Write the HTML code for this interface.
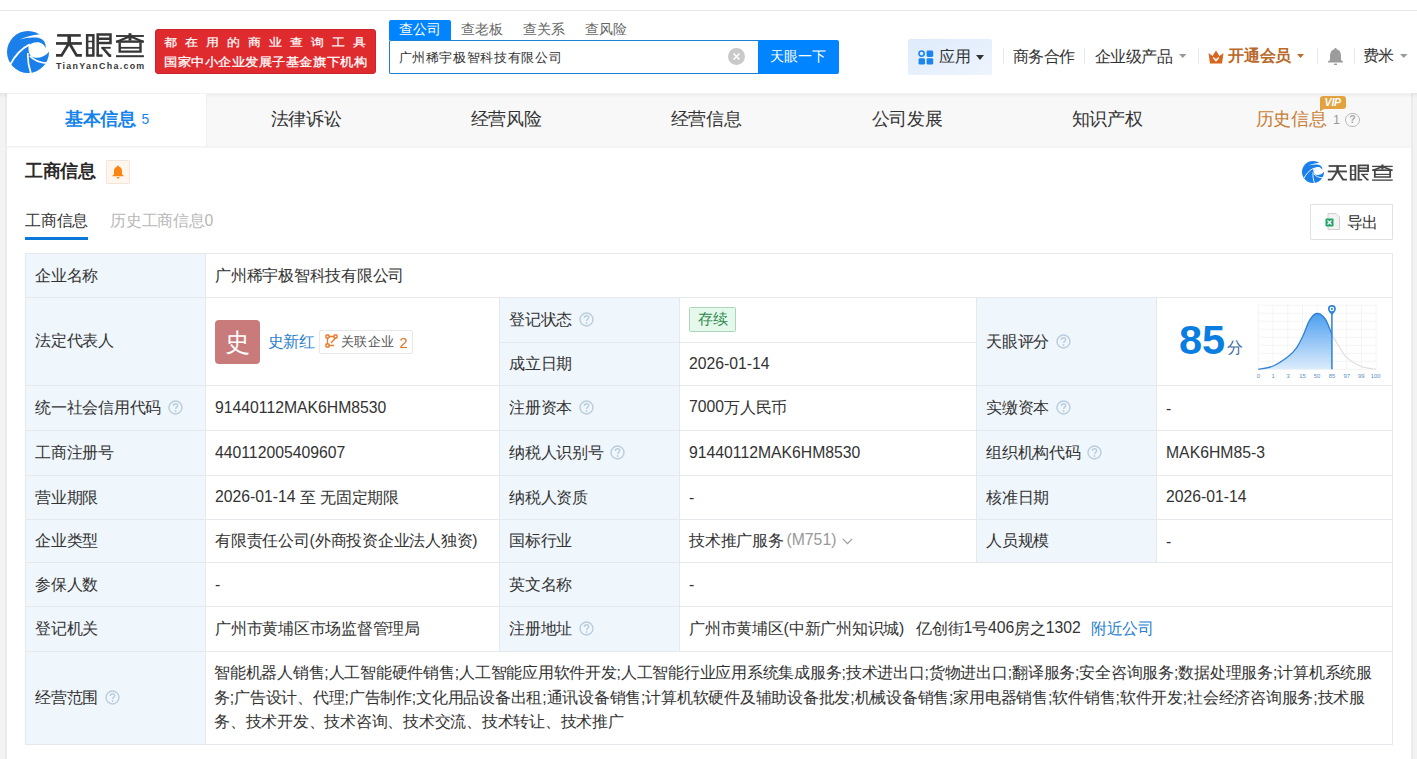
<!DOCTYPE html><html><head><meta charset="utf-8"><style>
*{margin:0;padding:0;box-sizing:border-box}
html,body{width:1417px;height:759px;overflow:hidden}
body{position:relative;background:#f3f3f3;font-family:"Liberation Sans",sans-serif;color:#333}
.t{position:absolute;white-space:nowrap}
.r{position:absolute}
.q{display:inline-block;width:14px;height:14px;border:1.5px solid #bccad6;border-radius:50%;color:#b5c4d1;font-size:10.5px;line-height:11px;text-align:center;font-weight:bold;vertical-align:middle;position:relative;top:-1px}
.cell{position:absolute;display:flex;align-items:center;white-space:nowrap;font-size:15.75px;color:#333;padding-left:10px;padding-top:2px}
.lab{background:#eff6fc}
.sc{}
.ln{position:relative;top:-1px}
</style></head><body>
<div class="r" style="left:0px;top:0px;width:1417px;height:93px;background:#fff"></div>
<div class="r" style="left:0px;top:10px;width:1417px;height:1px;background:#e6e6e6"></div>
<svg class="r" style="left:0;top:0;width:0;height:0"><defs><g id="ic">
<circle cx="21" cy="21" r="21" fill="#1a7fe8"/>
<path d="M13 8.6 C18 5.8 25 4.2 33 3.3 L43 3.3 L43 17 L38.4 17 C39.5 12 36.5 7.3 29 6.6 C23 6.1 18 7 13 8.6 Z" fill="#fff"/>
<path d="M21.6 14.8 C24 11.8 28 11 31.5 11.3 C35 11.7 37.5 14 38.4 17 L43 17 L43 19.3 C39.5 24.5 34 27.2 28.5 26.8 C23.5 26.4 20.8 22 21.6 14.8 Z" fill="#fff"/>
<path d="M3.3 33.5 C8 24.5 14 17.8 22.8 13.4" stroke="#fff" stroke-width="1.8" fill="none"/>
<path d="M20.9 22 C20.5 29.5 21.5 36 24.2 43" stroke="#fff" stroke-width="1.7" fill="none"/>
<path d="M22.8 24.8 C26.5 29.5 31.5 31.6 41 32.3" stroke="#fff" stroke-width="1.7" fill="none"/>
</g></defs></svg>
<svg class="r" style="left:7px;top:31px" width="42" height="42" viewBox="0 0 42 42"><use href="#ic"/></svg>
<svg class="r" style="left:0;top:0" width="160" height="80" viewBox="0 0 160 80"><defs><g id="lt" fill="none" stroke-linecap="butt" stroke-linejoin="miter">
<path d="M57.1 35.4 H80.8" stroke-width="2.6"/>
<path d="M69.2 35 V43.5" stroke-width="3.6"/>
<path d="M56 43.45 H81.9" stroke-width="2.7"/>
<path d="M68.6 44 L61.6 55.4 H56" stroke-width="2.8"/>
<path d="M69.8 44 L76.6 55.4 H81.9" stroke-width="2.8"/>
<path d="M87.15 35.35 H93.35 V55.55 H87.15 Z" stroke-width="2.5"/>
<path d="M87 41.45 H93.5 M87 48.05 H93.5" stroke-width="1.4"/>
<path d="M97.7 55.6 V34.4 H110.5 V43.1 H97.7 M97.7 38.8 H110.5" stroke-width="2.5"/>
<path d="M101.2 47.8 H110.7" stroke-width="1.8"/>
<path d="M102.4 47.5 L109.5 55.6 H111.2" stroke-width="2.6"/>
<path d="M96.5 55.6 H102.6" stroke-width="2.4"/>
<path d="M116 36 H143.9" stroke-width="1.9"/>
<path d="M130 33.2 V40.6" stroke-width="3"/>
<path d="M129.5 36.5 L117.5 41.6 M130.5 36.5 L142.5 41.6" stroke-width="2.2"/>
<path d="M116 41.6 H143.9" stroke-width="2.4"/>
<path d="M119.7 42.5 V51.6 H140.5 V42.5" stroke-width="2.4"/>
<path d="M119.7 47.8 H140.5" stroke-width="1.8"/>
<path d="M116 56.2 H143.9" stroke-width="2"/>
</g></defs><use href="#lt" stroke="#363636"/></svg>
<div class="t" style="left:56px;top:61.8px;font-size:8.9px;line-height:8.9px;color:#363636;font-weight:700;letter-spacing:1.3px;line-height:8.9px">TianYanCha.com</div>
<div class="r" style="left:155px;top:29px;width:221px;height:44.5px;background:#df2a2e;border:1px solid #c9252a;border-radius:3px"></div>
<div class="t" style="left:164px;top:36.5px;font-size:13.5px;line-height:13.5px;color:#fff;font-weight:400;letter-spacing:7.0px;-webkit-text-stroke:0.25px #fff;transform:scaleY(0.85);transform-origin:0 0">都在用的商业查询工具</div>
<div class="t" style="left:164px;top:56px;font-size:13.2px;line-height:13.2px;color:#fff;font-weight:400;letter-spacing:0.55px;-webkit-text-stroke:0.3px #fff;transform:scaleY(0.9);transform-origin:0 0">国家中小企业发展子基金旗下机构</div>
<div class="r" style="left:389px;top:20px;width:62px;height:20px;background:#0084ff;border-radius:2px 2px 0 0"></div>
<div class="t" style="left:399px;top:23px;font-size:13.8px;line-height:13.8px;color:#fff;font-weight:400;"><span style="letter-spacing:-0.20px">查公司</span></div>
<div class="t" style="left:461px;top:23px;font-size:13.8px;line-height:13.8px;color:#666;font-weight:400;"><span style="letter-spacing:-0.20px">查老板</span></div>
<div class="t" style="left:523px;top:23px;font-size:13.8px;line-height:13.8px;color:#666;font-weight:400;"><span style="letter-spacing:-0.20px">查关系</span></div>
<div class="t" style="left:585px;top:23px;font-size:13.8px;line-height:13.8px;color:#666;font-weight:400;"><span style="letter-spacing:-0.20px">查风险</span></div>
<div class="r" style="left:389px;top:40px;width:370px;height:33.5px;background:#fff;border:1px solid #1b7fd4;border-right:none;border-radius:2px 0 0 2px"></div>
<div class="t" style="left:398.5px;top:51px;font-size:13.3px;line-height:13.3px;color:#333;font-weight:400;letter-spacing:0.65px">广州稀宇极智科技有限公司</div>
<svg class="r" style="left:728px;top:47.5px" width="17" height="17" viewBox="0 0 17 17">
<circle cx="8.5" cy="8.5" r="8.5" fill="#c9c9c9"/><path d="M5.5 5.5 L11.5 11.5 M11.5 5.5 L5.5 11.5" stroke="#fff" stroke-width="1.5"/></svg>
<div class="r" style="left:758px;top:40px;width:81px;height:33.5px;background:#0084ff;border-radius:0 2px 2px 0"></div>
<div class="t" style="left:770.2px;top:50px;font-size:13.8px;line-height:13.8px;color:#fff;font-weight:400;"><span style="letter-spacing:-0.20px">天眼一下</span></div>
<div class="r" style="left:908px;top:39px;width:84px;height:35.5px;background:linear-gradient(160deg,#dfebfb,#e8f1fd 65%,#eef4fd);border-radius:2.5px"></div>
<svg class="r" style="left:918px;top:50px" width="16" height="15" viewBox="0 0 16 15">
<circle cx="3.6" cy="3.6" r="2.6" fill="none" stroke="#1c84f0" stroke-width="1.6"/>
<rect x="8.6" y="0.6" width="6.6" height="6.4" rx="1.4" fill="#1c84f0"/>
<rect x="0.6" y="8.2" width="6.4" height="6.4" rx="1.4" fill="#1c84f0"/>
<rect x="8.6" y="8.2" width="6.6" height="6.4" rx="1.4" fill="#1c84f0"/></svg>
<div class="t" style="left:939px;top:48.5px;font-size:15.75px;line-height:15.75px;color:#333;font-weight:400;"><span style="letter-spacing:-0.25px">应用</span></div>
<svg class="r" style="left:976px;top:54.7px" width="8" height="5" viewBox="0 0 8 5"><path d="M0 0 L8 0 L4.0 5 Z" fill="#333"/></svg>
<div class="r" style="left:1002.5px;top:48px;width:1.0px;height:16px;background:#e8e8e8"></div>
<div class="t" style="left:1012.5px;top:48.5px;font-size:15.5px;line-height:15.5px;color:#333;font-weight:400;"><span style="letter-spacing:-0.50px">商务合作</span></div>
<div class="r" style="left:1084px;top:48px;width:1px;height:16px;background:#e8e8e8"></div>
<div class="t" style="left:1094.5px;top:48.5px;font-size:15.5px;line-height:15.5px;color:#333;font-weight:400;"><span style="letter-spacing:-0.50px">企业级产品</span></div>
<svg class="r" style="left:1179px;top:54px" width="7.5" height="4" viewBox="0 0 7.5 4"><path d="M0 0 L7.5 0 L3.75 4 Z" fill="#9a9a9a"/></svg>
<div class="r" style="left:1198px;top:48px;width:1px;height:16px;background:#e8e8e8"></div>
<svg class="r" style="left:1208px;top:49.5px" width="16" height="14" viewBox="0 0 16 14">
<path d="M0.5 3 L4.5 6 L8 0.5 L11.5 6 L15.5 3 L14 13.5 L2 13.5 Z" fill="#d8661e"/>
<path d="M5.3 7.6 L8 10.6 L10.7 7.6" stroke="#fff" stroke-width="1.5" fill="none"/></svg>
<div class="t" style="left:1228px;top:48.3px;font-size:15.75px;line-height:15.75px;color:#b9692a;font-weight:700;"><span style="letter-spacing:-0.25px">开通会员</span></div>
<svg class="r" style="left:1297px;top:54px" width="7" height="4" viewBox="0 0 7 4"><path d="M0 0 L7 0 L3.5 4 Z" fill="#bf6a2a"/></svg>
<div class="r" style="left:1316.5px;top:48px;width:1.0px;height:16px;background:#e8e8e8"></div>
<svg class="r" style="left:1327px;top:47px" width="17" height="19" viewBox="0 0 17 19">
<path d="M8.5 1 C9.3 1 9.6 1.6 9.6 2.2 C12.6 2.9 14 5.5 14 8.5 L14 13 L16 14.5 L16 15.5 L1 15.5 L1 14.5 L3 13 L3 8.5 C3 5.5 4.4 2.9 7.4 2.2 C7.4 1.6 7.7 1 8.5 1 Z" fill="#9c9c9c"/>
<rect x="7" y="16.6" width="3" height="1.4" fill="#9c9c9c"/></svg>
<div class="r" style="left:1353.5px;top:48px;width:1.0px;height:16px;background:#e8e8e8"></div>
<div class="t" style="left:1362.5px;top:48.3px;font-size:15.75px;line-height:15.75px;color:#333;font-weight:400;"><span style="letter-spacing:-0.25px">费米</span></div>
<svg class="r" style="left:1400px;top:54px" width="7.5" height="4" viewBox="0 0 7.5 4"><path d="M0 0 L7.5 0 L3.75 4 Z" fill="#9a9a9a"/></svg>
<div class="r" style="left:5px;top:93px;width:2px;height:666px;background:#ebebeb"></div>
<div class="r" style="left:7px;top:93px;width:1404px;height:666px;background:#fff"></div>
<div class="r" style="left:1411px;top:93px;width:2px;height:666px;background:#ebebeb"></div>
<div class="r" style="left:7px;top:94px;width:1404px;height:52px;background:#f8f8f8"></div>
<div class="r" style="left:7px;top:146px;width:1404px;height:2px;background:linear-gradient(#f1f1f1,#f6f6f6)"></div>
<div class="r" style="left:0px;top:93px;width:1417px;height:5px;background:linear-gradient(rgba(0,0,0,0.06),rgba(0,0,0,0))"></div>
<div class="r" style="left:7px;top:94px;width:199px;height:52px;background:#fff"></div>
<div class="r" style="left:206px;top:94px;width:1px;height:52px;background:#efefef"></div>
<div class="t" style="left:65px;top:111px;font-size:17.7px;line-height:17.7px;color:#1683ec;font-weight:700;"><span style="letter-spacing:-0.30px">基本信息</span></div>
<div class="t" style="left:141.5px;top:113px;font-size:13.8px;line-height:13.8px;color:#1683ec;font-weight:400;">5</div>
<div class="t" style="left:270.5px;top:111px;font-size:17.7px;line-height:17.7px;color:#333;font-weight:400;"><span style="letter-spacing:-0.30px">法律诉讼</span></div>
<div class="t" style="left:470.5px;top:111px;font-size:17.7px;line-height:17.7px;color:#333;font-weight:400;"><span style="letter-spacing:-0.30px">经营风险</span></div>
<div class="t" style="left:670.5px;top:111px;font-size:17.7px;line-height:17.7px;color:#333;font-weight:400;"><span style="letter-spacing:-0.30px">经营信息</span></div>
<div class="t" style="left:871.5px;top:111px;font-size:17.7px;line-height:17.7px;color:#333;font-weight:400;"><span style="letter-spacing:-0.30px">公司发展</span></div>
<div class="t" style="left:1071.5px;top:111px;font-size:17.7px;line-height:17.7px;color:#333;font-weight:400;"><span style="letter-spacing:-0.30px">知识产权</span></div>
<div class="t" style="left:1255.5px;top:111px;font-size:17.7px;line-height:17.7px;color:#c87d36;font-weight:400;"><span style="letter-spacing:-0.30px">历史信息</span></div>
<div class="t" style="left:1333px;top:114px;font-size:12.6px;line-height:12.6px;color:#999;font-weight:400;">1</div>
<div class="r" style="left:1345.3px;top:112.8px;width:14.3px;height:14.3px;border:1.4px solid #b9b9b9;border-radius:50%;color:#aaa;font-size:10.5px;line-height:11.8px;text-align:center;font-weight:bold">?</div>
<div class="r" style="left:1319.5px;top:96.2px;width:26.5px;height:12.8px;background:#e2a23f;border-radius:3px 3px 3px 0;color:#fff;font-size:10.5px;line-height:13px;text-align:center;font-style:italic;font-weight:bold;letter-spacing:-0.2px">VIP</div>
<svg class="r" style="left:1319.5px;top:108.5px" width="4" height="3" viewBox="0 0 4 3"><path d="M0 0 L4 0 L0 2.5 Z" fill="#e2a23f"/></svg>
<div class="t" style="left:25px;top:162.5px;font-size:17.7px;line-height:17.7px;color:#2a2a2a;font-weight:700;"><span style="letter-spacing:-0.30px">工商信息</span></div>
<div class="r" style="left:106px;top:160px;width:24px;height:24px;background:#fff6ee;border:1px solid #f4e5d8;border-radius:1px"></div>
<svg class="r" style="left:112px;top:165px" width="12" height="14" viewBox="0 0 12 14">
<path d="M6 0.5 C6.6 0.5 6.9 1 6.9 1.4 C9 2 10 3.8 10 6 L10 9.2 L11.5 10.5 L11.5 11.3 L0.5 11.3 L0.5 10.5 L2 9.2 L2 6 C2 3.8 3 2 5.1 1.4 C5.1 1 5.4 0.5 6 0.5 Z" fill="#fa8511"/>
<rect x="4.8" y="12" width="2.4" height="1.4" fill="#fa8511"/></svg>
<svg class="r" style="left:1302px;top:161px" width="22" height="22" viewBox="0 0 42 42"><use href="#ic"/></svg>
<svg class="r" style="left:0;top:0" width="1417" height="200" viewBox="0 0 1417 200"><use href="#lt" stroke="#464646" transform="translate(1286.45 141.95) scale(0.7383 0.6792)"/></svg>
<div class="t" style="left:25px;top:213px;font-size:15.75px;line-height:15.75px;color:#333;font-weight:400;"><span style="letter-spacing:-0.25px">工商信息</span></div>
<div class="t" style="left:110px;top:213px;font-size:15.75px;line-height:15.75px;color:#b8b8b8;font-weight:400;"><span style="letter-spacing:-0.25px">历史工商信息</span>0</div>
<div class="r" style="left:25px;top:237px;width:63px;height:3px;background:#0a78d8"></div>
<div class="r" style="left:1310px;top:204px;width:83px;height:36px;border:1px solid #e1e1e1;border-radius:1px;background:#fff"></div>
<svg class="r" style="left:1325px;top:213px" width="15" height="17" viewBox="0 0 15 17">
<path d="M3 0.5 L11 0.5 L14.5 4 L14.5 16.5 L3 16.5 Z" fill="#f3f3f3" stroke="#cfcfcf"/>
<rect x="0.5" y="5.5" width="8" height="8" rx="1" fill="#21a366"/>
<path d="M2.5 7.5 L6.5 11.5 M6.5 7.5 L2.5 11.5" stroke="#fff" stroke-width="1.3"/></svg>
<div class="t" style="left:1346.5px;top:215px;font-size:15.75px;line-height:15.75px;color:#333;font-weight:400;"><span style="letter-spacing:-0.25px">导出</span></div>
<div class="r" style="left:25px;top:253px;width:1368px;height:491px;background:#fff"></div>
<div class="r" style="left:25px;top:253px;width:180px;height:44px;background:#eff6fc"></div>
<div class="r" style="left:25px;top:297px;width:180px;height:88px;background:#eff6fc"></div>
<div class="r" style="left:25px;top:385px;width:180px;height:45px;background:#eff6fc"></div>
<div class="r" style="left:25px;top:430px;width:180px;height:45px;background:#eff6fc"></div>
<div class="r" style="left:25px;top:475px;width:180px;height:44px;background:#eff6fc"></div>
<div class="r" style="left:25px;top:519px;width:180px;height:43px;background:#eff6fc"></div>
<div class="r" style="left:25px;top:562px;width:180px;height:44px;background:#eff6fc"></div>
<div class="r" style="left:25px;top:606px;width:180px;height:45px;background:#eff6fc"></div>
<div class="r" style="left:25px;top:651px;width:180px;height:93px;background:#eff6fc"></div>
<div class="r" style="left:499px;top:297px;width:180px;height:88px;background:#eff6fc"></div>
<div class="r" style="left:499px;top:385px;width:180px;height:45px;background:#eff6fc"></div>
<div class="r" style="left:499px;top:430px;width:180px;height:45px;background:#eff6fc"></div>
<div class="r" style="left:499px;top:475px;width:180px;height:44px;background:#eff6fc"></div>
<div class="r" style="left:499px;top:519px;width:180px;height:43px;background:#eff6fc"></div>
<div class="r" style="left:499px;top:562px;width:180px;height:44px;background:#eff6fc"></div>
<div class="r" style="left:499px;top:606px;width:180px;height:45px;background:#eff6fc"></div>
<div class="r" style="left:976px;top:297px;width:180px;height:88px;background:#eff6fc"></div>
<div class="r" style="left:976px;top:385px;width:180px;height:45px;background:#eff6fc"></div>
<div class="r" style="left:976px;top:430px;width:180px;height:45px;background:#eff6fc"></div>
<div class="r" style="left:976px;top:475px;width:180px;height:44px;background:#eff6fc"></div>
<div class="r" style="left:976px;top:519px;width:180px;height:43px;background:#eff6fc"></div>
<div class="r" style="left:25px;top:253px;width:1368px;height:1px;background:#e5e9ee"></div>
<div class="r" style="left:25px;top:297px;width:1368px;height:1px;background:#e5e9ee"></div>
<div class="r" style="left:25px;top:385px;width:1368px;height:1px;background:#e5e9ee"></div>
<div class="r" style="left:25px;top:430px;width:1368px;height:1px;background:#e5e9ee"></div>
<div class="r" style="left:25px;top:475px;width:1368px;height:1px;background:#e5e9ee"></div>
<div class="r" style="left:25px;top:519px;width:1368px;height:1px;background:#e5e9ee"></div>
<div class="r" style="left:25px;top:562px;width:1368px;height:1px;background:#e5e9ee"></div>
<div class="r" style="left:25px;top:606px;width:1368px;height:1px;background:#e5e9ee"></div>
<div class="r" style="left:25px;top:651px;width:1368px;height:1px;background:#e5e9ee"></div>
<div class="r" style="left:25px;top:744px;width:1368px;height:1px;background:#e5e9ee"></div>
<div class="r" style="left:499px;top:342px;width:477px;height:1px;background:#e5e9ee"></div>
<div class="r" style="left:25px;top:253px;width:1px;height:492px;background:#e5e9ee"></div>
<div class="r" style="left:1392px;top:253px;width:1px;height:492px;background:#e5e9ee"></div>
<div class="r" style="left:205px;top:253px;width:1px;height:492px;background:#e5e9ee"></div>
<div class="r" style="left:499px;top:297px;width:1px;height:354px;background:#e5e9ee"></div>
<div class="r" style="left:679px;top:297px;width:1px;height:354px;background:#e5e9ee"></div>
<div class="r" style="left:976px;top:297px;width:1px;height:265px;background:#e5e9ee"></div>
<div class="r" style="left:1156px;top:297px;width:1px;height:265px;background:#e5e9ee"></div>
<div class="cell" style="left:25px;top:253px;height:44px;"><span><span style="letter-spacing:-0.25px">企业名称</span></span></div>
<div class="cell" style="left:205px;top:253px;height:44px;"><span><span style="letter-spacing:-0.25px">广州稀宇极智科技有限公司</span></span></div>
<div class="cell" style="left:25px;top:297px;height:88px;padding-top:0"><span><span style="letter-spacing:-0.25px">法定代表人</span></span></div>
<div class="r" style="left:215px;top:319.5px;width:45px;height:44px;background:#c97b7b;border-radius:4px;color:#fff;font-size:25px;line-height:44px;text-align:center">史</div>
<div class="t" style="left:267.5px;top:333.5px;font-size:15.75px;line-height:15.75px;color:#2a7fd0;font-weight:400;"><span style="letter-spacing:-0.25px">史新红</span></div>
<div class="r" style="left:318.5px;top:329.5px;width:94px;height:24px;border:1px solid #e8e8e8;border-radius:2px;background:#fff"></div>
<svg class="r" style="left:324.5px;top:334px" width="13" height="14" viewBox="0 0 13 14">
<rect x="1" y="1" width="3" height="3" rx="0.5" fill="none" stroke="#e87b2e" stroke-width="1.4"/>
<rect x="9" y="1" width="3" height="3" rx="0.5" fill="none" stroke="#e87b2e" stroke-width="1.4"/>
<rect x="1" y="10" width="3" height="3" rx="0.5" fill="none" stroke="#e87b2e" stroke-width="1.4"/>
<path d="M4 2.5 L9 2.5 M2.5 4 L2.5 10 M4 11.5 L9 11.5 M10.5 4 L6 9" stroke="#e87b2e" stroke-width="1.3"/></svg>
<div class="t" style="left:340.5px;top:335px;font-size:13.3px;line-height:13.3px;color:#555;font-weight:400;letter-spacing:0.6px">关联企业</div>
<div class="t" style="left:399.5px;top:335.5px;font-size:14.5px;line-height:14.5px;color:#e0732b;font-weight:400;">2</div>
<div class="cell" style="left:499px;top:297px;height:45px;"><span><span style="letter-spacing:-0.25px">登记状态</span><svg style="margin-left:6.5px;vertical-align:middle;position:relative;top:-1px" width="15" height="15" viewBox="0 0 15 15"><circle cx="7.5" cy="7.5" r="6.5" fill="none" stroke="#b9cddd" stroke-width="1.4"/><path d="M5.3 6 C5.3 4.6 6.3 3.8 7.5 3.8 C8.8 3.8 9.7 4.6 9.7 5.7 C9.7 7.1 7.6 7.2 7.6 8.9" fill="none" stroke="#b9cddd" stroke-width="1.4"/><circle cx="7.6" cy="11" r="0.9" fill="#b9cddd"/></svg></span></div>
<div class="r" style="left:689px;top:307px;width:47px;height:25px;background:#e5f8ec;border:1px solid #add5bb;border-radius:1.5px;color:#2d8a4d;font-size:15px;line-height:21px;text-align:center">存续</div>
<div class="cell" style="left:499px;top:342px;height:43px;"><span><span style="letter-spacing:-0.25px">成立日期</span></span></div>
<div class="cell" style="left:679px;top:342px;height:43px;"><span><span class="ln">2026-01-14</span></span></div>
<div class="cell" style="left:976px;top:297px;height:88px;"><span><span style="letter-spacing:-0.25px">天眼评分</span><svg style="margin-left:6.5px;vertical-align:middle;position:relative;top:-1px" width="15" height="15" viewBox="0 0 15 15"><circle cx="7.5" cy="7.5" r="6.5" fill="none" stroke="#b9cddd" stroke-width="1.4"/><path d="M5.3 6 C5.3 4.6 6.3 3.8 7.5 3.8 C8.8 3.8 9.7 4.6 9.7 5.7 C9.7 7.1 7.6 7.2 7.6 8.9" fill="none" stroke="#b9cddd" stroke-width="1.4"/><circle cx="7.6" cy="11" r="0.9" fill="#b9cddd"/></svg></span></div>
<div class="t" style="left:1179px;top:317px;font-size:41.5px;line-height:41.5px;color:#0a7ee0;font-weight:700;line-height:46px">85</div>
<div class="t" style="left:1226.5px;top:340px;font-size:16px;line-height:16px;color:#3f6f9f;font-weight:400;">分</div>
<svg class="r" style="left:1250px;top:298px" width="135" height="84" viewBox="1250 298 135 84"><line x1="1258.30" y1="305.2" x2="1258.30" y2="369.3" stroke="#f1f1f1" stroke-width="0.8"/><line x1="1273.02" y1="305.2" x2="1273.02" y2="369.3" stroke="#f1f1f1" stroke-width="0.8"/><line x1="1287.75" y1="305.2" x2="1287.75" y2="369.3" stroke="#f1f1f1" stroke-width="0.8"/><line x1="1302.47" y1="305.2" x2="1302.47" y2="369.3" stroke="#f1f1f1" stroke-width="0.8"/><line x1="1317.20" y1="305.2" x2="1317.20" y2="369.3" stroke="#f1f1f1" stroke-width="0.8"/><line x1="1331.92" y1="305.2" x2="1331.92" y2="369.3" stroke="#f1f1f1" stroke-width="0.8"/><line x1="1346.65" y1="305.2" x2="1346.65" y2="369.3" stroke="#f1f1f1" stroke-width="0.8"/><line x1="1361.38" y1="305.2" x2="1361.38" y2="369.3" stroke="#f1f1f1" stroke-width="0.8"/><line x1="1376.10" y1="305.2" x2="1376.10" y2="369.3" stroke="#f1f1f1" stroke-width="0.8"/><line x1="1258.3" y1="305.20" x2="1376.1" y2="305.20" stroke="#f1f1f1" stroke-width="0.8"/><line x1="1258.3" y1="313.21" x2="1376.1" y2="313.21" stroke="#f1f1f1" stroke-width="0.8"/><line x1="1258.3" y1="321.23" x2="1376.1" y2="321.23" stroke="#f1f1f1" stroke-width="0.8"/><line x1="1258.3" y1="329.24" x2="1376.1" y2="329.24" stroke="#f1f1f1" stroke-width="0.8"/><line x1="1258.3" y1="337.25" x2="1376.1" y2="337.25" stroke="#f1f1f1" stroke-width="0.8"/><line x1="1258.3" y1="345.26" x2="1376.1" y2="345.26" stroke="#f1f1f1" stroke-width="0.8"/><line x1="1258.3" y1="353.27" x2="1376.1" y2="353.27" stroke="#f1f1f1" stroke-width="0.8"/><line x1="1258.3" y1="361.29" x2="1376.1" y2="361.29" stroke="#f1f1f1" stroke-width="0.8"/><line x1="1258.3" y1="369.30" x2="1376.1" y2="369.30" stroke="#f1f1f1" stroke-width="0.8"/><defs><linearGradient id="bg" x1="0" y1="0" x2="0" y2="1"><stop offset="0" stop-color="#4d9ff0"/><stop offset="1" stop-color="#dcecfc"/></linearGradient></defs><path d="M1258.3 369.3 C1260.78 368.75 1268.22 368.12 1273.2 366.0 C1278.18 363.88 1284.32 359.63 1288.2 356.6 C1292.08 353.57 1294.02 351.30 1296.5 347.8 C1298.98 344.30 1300.90 340.22 1303.1 335.6 C1305.30 330.98 1307.40 323.78 1309.7 320.1 C1312.00 316.42 1314.32 313.68 1316.9 313.5 C1319.48 313.32 1322.70 315.50 1325.2 319.0 C1327.70 322.50 1330.78 331.92 1331.9 334.5 L1331.9 369.3 L1258.3 369.3 Z" fill="url(#bg)"/><path d="M1258.3 369.3 C1260.78 368.75 1268.22 368.12 1273.2 366.0 C1278.18 363.88 1284.32 359.63 1288.2 356.6 C1292.08 353.57 1294.02 351.30 1296.5 347.8 C1298.98 344.30 1300.90 340.22 1303.1 335.6 C1305.30 330.98 1307.40 323.78 1309.7 320.1 C1312.00 316.42 1314.32 313.68 1316.9 313.5 C1319.48 313.32 1322.70 315.50 1325.2 319.0 C1327.70 322.50 1330.78 331.92 1331.9 334.5" stroke="#2f80d4" stroke-width="1.3" fill="none"/><path d="M1331.9 334.5 C1333.00 336.35 1336.02 341.73 1338.5 345.6 C1340.98 349.47 1343.02 354.20 1346.8 357.7 C1350.58 361.20 1356.32 364.67 1361.2 366.6 C1366.08 368.53 1373.62 368.85 1376.1 369.3" stroke="#dddddd" stroke-width="1.1" fill="none"/><line x1="1331.9" y1="312" x2="1331.9" y2="369.3" stroke="#2f80d4" stroke-width="1.5"/><path d="M1331.9 315.2 C1330.7 313.4 1327.9 311.6 1327.9 309 A4 4 0 1 1 1335.9 309 C1335.9 311.6 1333.1000000000001 313.4 1331.9 315.2 Z" fill="#2f86dc"/><circle cx="1331.9" cy="309" r="2.3" fill="#fff"/><circle cx="1331.9" cy="309" r="1.1" fill="#2f86dc"/><text x="1258.3" y="377.6" font-size="5.8" fill="#5b90c8" text-anchor="middle" font-family="Liberation Sans">0</text><text x="1273.2" y="377.6" font-size="5.8" fill="#5b90c8" text-anchor="middle" font-family="Liberation Sans">1</text><text x="1288.2" y="377.6" font-size="5.8" fill="#5b90c8" text-anchor="middle" font-family="Liberation Sans">3</text><text x="1302.5" y="377.6" font-size="5.8" fill="#5b90c8" text-anchor="middle" font-family="Liberation Sans">15</text><text x="1317" y="377.6" font-size="5.8" fill="#5b90c8" text-anchor="middle" font-family="Liberation Sans">50</text><text x="1331.9" y="377.6" font-size="5.8" fill="#5b90c8" text-anchor="middle" font-family="Liberation Sans">85</text><text x="1346.8" y="377.6" font-size="5.8" fill="#5b90c8" text-anchor="middle" font-family="Liberation Sans">97</text><text x="1361.2" y="377.6" font-size="5.8" fill="#5b90c8" text-anchor="middle" font-family="Liberation Sans">99</text><text x="1375.6" y="377.6" font-size="5.8" fill="#5b90c8" text-anchor="middle" font-family="Liberation Sans">100</text></svg>
<div class="cell" style="left:25px;top:385px;height:45px;"><span><span style="letter-spacing:-0.25px">统一社会信用代码</span><svg style="margin-left:6.5px;vertical-align:middle;position:relative;top:-1px" width="15" height="15" viewBox="0 0 15 15"><circle cx="7.5" cy="7.5" r="6.5" fill="none" stroke="#b9cddd" stroke-width="1.4"/><path d="M5.3 6 C5.3 4.6 6.3 3.8 7.5 3.8 C8.8 3.8 9.7 4.6 9.7 5.7 C9.7 7.1 7.6 7.2 7.6 8.9" fill="none" stroke="#b9cddd" stroke-width="1.4"/><circle cx="7.6" cy="11" r="0.9" fill="#b9cddd"/></svg></span></div>
<div class="cell" style="left:205px;top:385px;height:45px;"><span><span class="ln">91440112MAK6HM8530</span></span></div>
<div class="cell" style="left:499px;top:385px;height:45px;"><span><span style="letter-spacing:-0.25px">注册资本</span><svg style="margin-left:6.5px;vertical-align:middle;position:relative;top:-1px" width="15" height="15" viewBox="0 0 15 15"><circle cx="7.5" cy="7.5" r="6.5" fill="none" stroke="#b9cddd" stroke-width="1.4"/><path d="M5.3 6 C5.3 4.6 6.3 3.8 7.5 3.8 C8.8 3.8 9.7 4.6 9.7 5.7 C9.7 7.1 7.6 7.2 7.6 8.9" fill="none" stroke="#b9cddd" stroke-width="1.4"/><circle cx="7.6" cy="11" r="0.9" fill="#b9cddd"/></svg></span></div>
<div class="cell" style="left:679px;top:385px;height:45px;"><span><span class="ln">7000</span><span style="letter-spacing:-0.25px">万人民币</span></span></div>
<div class="cell" style="left:976px;top:385px;height:45px;"><span><span style="letter-spacing:-0.25px">实缴资本</span><svg style="margin-left:6.5px;vertical-align:middle;position:relative;top:-1px" width="15" height="15" viewBox="0 0 15 15"><circle cx="7.5" cy="7.5" r="6.5" fill="none" stroke="#b9cddd" stroke-width="1.4"/><path d="M5.3 6 C5.3 4.6 6.3 3.8 7.5 3.8 C8.8 3.8 9.7 4.6 9.7 5.7 C9.7 7.1 7.6 7.2 7.6 8.9" fill="none" stroke="#b9cddd" stroke-width="1.4"/><circle cx="7.6" cy="11" r="0.9" fill="#b9cddd"/></svg></span></div>
<div class="cell" style="left:1156px;top:385px;height:45px;"><span>-</span></div>
<div class="cell" style="left:25px;top:430px;height:45px;"><span><span style="letter-spacing:-0.25px">工商注册号</span></span></div>
<div class="cell" style="left:205px;top:430px;height:45px;"><span><span class="ln">440112005409607</span></span></div>
<div class="cell" style="left:499px;top:430px;height:45px;"><span><span style="letter-spacing:-0.25px">纳税人识别号</span><svg style="margin-left:6.5px;vertical-align:middle;position:relative;top:-1px" width="15" height="15" viewBox="0 0 15 15"><circle cx="7.5" cy="7.5" r="6.5" fill="none" stroke="#b9cddd" stroke-width="1.4"/><path d="M5.3 6 C5.3 4.6 6.3 3.8 7.5 3.8 C8.8 3.8 9.7 4.6 9.7 5.7 C9.7 7.1 7.6 7.2 7.6 8.9" fill="none" stroke="#b9cddd" stroke-width="1.4"/><circle cx="7.6" cy="11" r="0.9" fill="#b9cddd"/></svg></span></div>
<div class="cell" style="left:679px;top:430px;height:45px;"><span><span class="ln">91440112MAK6HM8530</span></span></div>
<div class="cell" style="left:976px;top:430px;height:45px;"><span><span style="letter-spacing:-0.25px">组织机构代码</span><svg style="margin-left:6.5px;vertical-align:middle;position:relative;top:-1px" width="15" height="15" viewBox="0 0 15 15"><circle cx="7.5" cy="7.5" r="6.5" fill="none" stroke="#b9cddd" stroke-width="1.4"/><path d="M5.3 6 C5.3 4.6 6.3 3.8 7.5 3.8 C8.8 3.8 9.7 4.6 9.7 5.7 C9.7 7.1 7.6 7.2 7.6 8.9" fill="none" stroke="#b9cddd" stroke-width="1.4"/><circle cx="7.6" cy="11" r="0.9" fill="#b9cddd"/></svg></span></div>
<div class="cell" style="left:1156px;top:430px;height:45px;"><span><span class="ln">MAK6HM85-3</span></span></div>
<div class="cell" style="left:25px;top:475px;height:44px;"><span><span style="letter-spacing:-0.25px">营业期限</span></span></div>
<div class="cell" style="left:205px;top:475px;height:44px;"><span><span class="ln">2026-01-14</span> <span style="letter-spacing:-0.25px">至</span> <span style="letter-spacing:-0.25px">无固定期限</span></span></div>
<div class="cell" style="left:499px;top:475px;height:44px;"><span><span style="letter-spacing:-0.25px">纳税人资质</span></span></div>
<div class="cell" style="left:679px;top:475px;height:44px;"><span>-</span></div>
<div class="cell" style="left:976px;top:475px;height:44px;"><span><span style="letter-spacing:-0.25px">核准日期</span></span></div>
<div class="cell" style="left:1156px;top:475px;height:44px;"><span><span class="ln">2026-01-14</span></span></div>
<div class="cell" style="left:25px;top:519px;height:43px;"><span><span style="letter-spacing:-0.25px">企业类型</span></span></div>
<div class="cell" style="left:205px;top:519px;height:43px;"><span><span style="letter-spacing:-0.25px">有限责任公司</span>(<span style="letter-spacing:-0.25px">外商投资企业法人独资</span>)</span></div>
<div class="cell" style="left:499px;top:519px;height:43px;"><span><span style="letter-spacing:-0.25px">国标行业</span></span></div>
<div class="cell" style="left:679px;top:519px;height:43px;"><span><span style="letter-spacing:-0.25px">技术推广服务</span><span class="ln" style="color:#999;margin-left:3px">(M751)</span><svg style="margin-left:6px;vertical-align:middle" width="11" height="7" viewBox="0 0 11 7"><path d="M0.8 0.8 L5.5 5.6 L10.2 0.8" stroke="#999" stroke-width="1.2" fill="none"/></svg></span></div>
<div class="cell" style="left:976px;top:519px;height:43px;"><span><span style="letter-spacing:-0.25px">人员规模</span></span></div>
<div class="cell" style="left:1156px;top:519px;height:43px;"><span>-</span></div>
<div class="cell" style="left:25px;top:562px;height:44px;"><span><span style="letter-spacing:-0.25px">参保人数</span></span></div>
<div class="cell" style="left:205px;top:562px;height:44px;"><span>-</span></div>
<div class="cell" style="left:499px;top:562px;height:44px;"><span><span style="letter-spacing:-0.25px">英文名称</span></span></div>
<div class="cell" style="left:679px;top:562px;height:44px;"><span>-</span></div>
<div class="cell" style="left:25px;top:606px;height:45px;"><span><span style="letter-spacing:-0.25px">登记机关</span></span></div>
<div class="cell" style="left:205px;top:606px;height:45px;"><span><span style="letter-spacing:-0.25px">广州市黄埔区市场监督管理局</span></span></div>
<div class="cell" style="left:499px;top:606px;height:45px;"><span><span style="letter-spacing:-0.25px">注册地址</span><svg style="margin-left:6.5px;vertical-align:middle;position:relative;top:-1px" width="15" height="15" viewBox="0 0 15 15"><circle cx="7.5" cy="7.5" r="6.5" fill="none" stroke="#b9cddd" stroke-width="1.4"/><path d="M5.3 6 C5.3 4.6 6.3 3.8 7.5 3.8 C8.8 3.8 9.7 4.6 9.7 5.7 C9.7 7.1 7.6 7.2 7.6 8.9" fill="none" stroke="#b9cddd" stroke-width="1.4"/><circle cx="7.6" cy="11" r="0.9" fill="#b9cddd"/></svg></span></div>
<div class="cell" style="left:679px;top:606px;height:45px;"><span><span style="letter-spacing:-0.25px">广州市黄埔区</span>(<span style="letter-spacing:-0.25px">中新广州知识城</span>)<span style="margin-left:12px"><span style="letter-spacing:-0.25px">亿创街</span><span class="ln">1</span><span style="letter-spacing:-0.25px">号</span><span class="ln">406</span><span style="letter-spacing:-0.25px">房之</span><span class="ln">1302</span></span><span style="color:#2a7fd0;margin-left:10px"><span style="letter-spacing:-0.25px">附近公司</span></span></span></div>
<div class="cell" style="left:25px;top:651px;height:93px;"><span><span style="letter-spacing:-0.25px">经营范围</span><svg style="margin-left:6.5px;vertical-align:middle;position:relative;top:-1px" width="15" height="15" viewBox="0 0 15 15"><circle cx="7.5" cy="7.5" r="6.5" fill="none" stroke="#b9cddd" stroke-width="1.4"/><path d="M5.3 6 C5.3 4.6 6.3 3.8 7.5 3.8 C8.8 3.8 9.7 4.6 9.7 5.7 C9.7 7.1 7.6 7.2 7.6 8.9" fill="none" stroke="#b9cddd" stroke-width="1.4"/><circle cx="7.6" cy="11" r="0.9" fill="#b9cddd"/></svg></span></div>
<div class="t" style="left:214px;top:665.0px;font-size:15.75px;line-height:15.75px;color:#333;font-weight:400;"><span style="letter-spacing:-0.25px">智能机器人销售</span><span class="sc">;</span><span style="letter-spacing:-0.25px">人工智能硬件销售</span><span class="sc">;</span><span style="letter-spacing:-0.25px">人工智能应用软件开发</span><span class="sc">;</span><span style="letter-spacing:-0.25px">人工智能行业应用系统集成服务</span><span class="sc">;</span><span style="letter-spacing:-0.25px">技术进出口</span><span class="sc">;</span><span style="letter-spacing:-0.25px">货物进出口</span><span class="sc">;</span><span style="letter-spacing:-0.25px">翻译服务</span><span class="sc">;</span><span style="letter-spacing:-0.25px">安全咨询服务</span><span class="sc">;</span><span style="letter-spacing:-0.25px">数据处理服务</span><span class="sc">;</span><span style="letter-spacing:-0.25px">计算机系统服</span></div>
<div class="t" style="left:214px;top:689.7px;font-size:15.75px;line-height:15.75px;color:#333;font-weight:400;"><span style="letter-spacing:-0.25px">务</span><span class="sc">;</span><span style="letter-spacing:-0.25px">广告设计、代理</span><span class="sc">;</span><span style="letter-spacing:-0.25px">广告制作</span><span class="sc">;</span><span style="letter-spacing:-0.25px">文化用品设备出租</span><span class="sc">;</span><span style="letter-spacing:-0.25px">通讯设备销售</span><span class="sc">;</span><span style="letter-spacing:-0.25px">计算机软硬件及辅助设备批发</span><span class="sc">;</span><span style="letter-spacing:-0.25px">机械设备销售</span><span class="sc">;</span><span style="letter-spacing:-0.25px">家用电器销售</span><span class="sc">;</span><span style="letter-spacing:-0.25px">软件销售</span><span class="sc">;</span><span style="letter-spacing:-0.25px">软件开发</span><span class="sc">;</span><span style="letter-spacing:-0.25px">社会经济咨询服务</span><span class="sc">;</span><span style="letter-spacing:-0.25px">技术服</span></div>
<div class="t" style="left:214px;top:714.4px;font-size:15.75px;line-height:15.75px;color:#333;font-weight:400;"><span style="letter-spacing:-0.25px">务、技术开发、技术咨询、技术交流、技术转让、技术推广</span></div>
</body></html>
